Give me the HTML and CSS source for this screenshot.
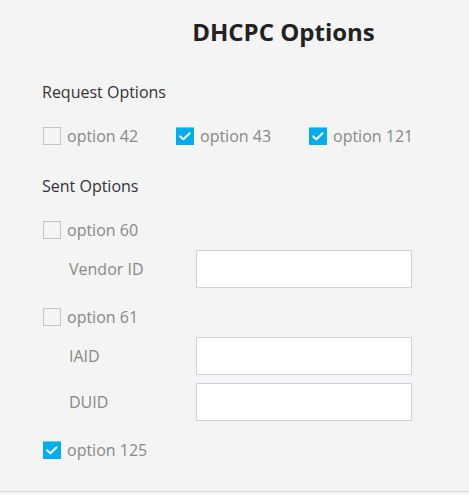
FILE: index.html
```html
<!DOCTYPE html>
<html>
<head>
<meta charset="utf-8">
<link rel="stylesheet" href="styles.css">
</head>
<body>
<div class="page">
  <h1 class="title">DHCPC Options</h1>

  <div class="section-title req">Request Options</div>
  <div class="check-grid">
    <label class="check"><span class="box"></span><span class="check-text">option 42</span></label>
    <label class="check"><span class="box on"><svg viewBox="0 0 18 18" width="18" height="18"><polyline points="4.2,9.4 7.4,12.3 13.6,6.3" fill="none" stroke="#fff" stroke-width="2" stroke-linecap="round" stroke-linejoin="round"/></svg></span><span class="check-text">option 43</span></label>
    <label class="check"><span class="box on"><svg viewBox="0 0 18 18" width="18" height="18"><polyline points="4.2,9.4 7.4,12.3 13.6,6.3" fill="none" stroke="#fff" stroke-width="2" stroke-linecap="round" stroke-linejoin="round"/></svg></span><span class="check-text">option 121</span></label>
  </div>

  <div class="section-title sent">Sent Options</div>

  <label class="check opt60"><span class="box"></span><span class="check-text">option 60</span></label>
  <div class="field f-vendor"><span class="field-label">Vendor ID</span><input class="field-input" type="text"></div>

  <label class="check opt61"><span class="box"></span><span class="check-text">option 61</span></label>
  <div class="field f-iaid"><span class="field-label">IAID</span><input class="field-input" type="text"></div>
  <div class="field f-duid"><span class="field-label">DUID</span><input class="field-input" type="text"></div>

  <label class="check opt125"><span class="box on"><svg viewBox="0 0 18 18" width="18" height="18"><polyline points="4.2,9.4 7.4,12.3 13.6,6.3" fill="none" stroke="#fff" stroke-width="2" stroke-linecap="round" stroke-linejoin="round"/></svg></span><span class="check-text">option 125</span></label>
</div>
</body>
</html>
```

FILE: styles.css
```css
html, body {
  margin: 0;
  padding: 0;
  background: #f4f4f4;
}
body {
  font-family: "Open Sans", "DejaVu Sans", sans-serif;
  width: 469px;
  height: 495px;
  overflow: hidden;
}
.page {
  display: flex;
  flex-direction: column;
  align-items: flex-start;
  padding: 16px 0 0 43px;
  box-sizing: border-box;
  border-bottom: 1px solid #d9d9d9;
  height: 492px;
}
.title {
  align-self: stretch;
  margin: 0 0 0 55px;
  font-size: 24px;
  line-height: 32px;
  font-weight: 700;
  color: #222;
  text-align: center;
}
.section-title {
  font-size: 16px;
  line-height: 22px;
  color: #333;
  margin-left: -1px;
}
.req { margin-top: 33px; }
.sent { margin-top: 28px; }
.check-grid {
  display: grid;
  grid-template-columns: 133px 133px 133px;
  margin-top: 22px;
}
.check {
  display: flex;
  align-items: center;
  gap: 6px;
  height: 22px;
}
.box {
  width: 18px;
  height: 18px;
  box-sizing: border-box;
  border: 1px solid #c5c5c5;
  background: #f4f4f4;
  display: block;
}
.box.on {
  border: none;
  border-top: 1px solid #66cdf3;
  background: #00adef;
}
.box.on svg {
  display: block;
  margin-top: -1px;
}
.check-text {
  font-size: 16px;
  line-height: 22px;
  color: #888;
}
.opt60 { margin-top: 22px; }
.opt61 { margin-top: 18px; }
.opt125 { margin-top: 18px; }
.field {
  display: flex;
  align-items: center;
  margin-left: 26px;
}
.f-vendor { margin-top: 9px; }
.f-iaid { margin-top: 9px; }
.f-duid { margin-top: 8px; }
.field-label {
  width: 127px;
  font-size: 16px;
  line-height: 22px;
  color: #888;
}
.field-input {
  width: 216px;
  height: 38px;
  box-sizing: border-box;
  border: 1px solid #cdd1d8;
  background: #fff;
  margin: 0;
  padding: 0 8px;
  outline: none;
}
```
